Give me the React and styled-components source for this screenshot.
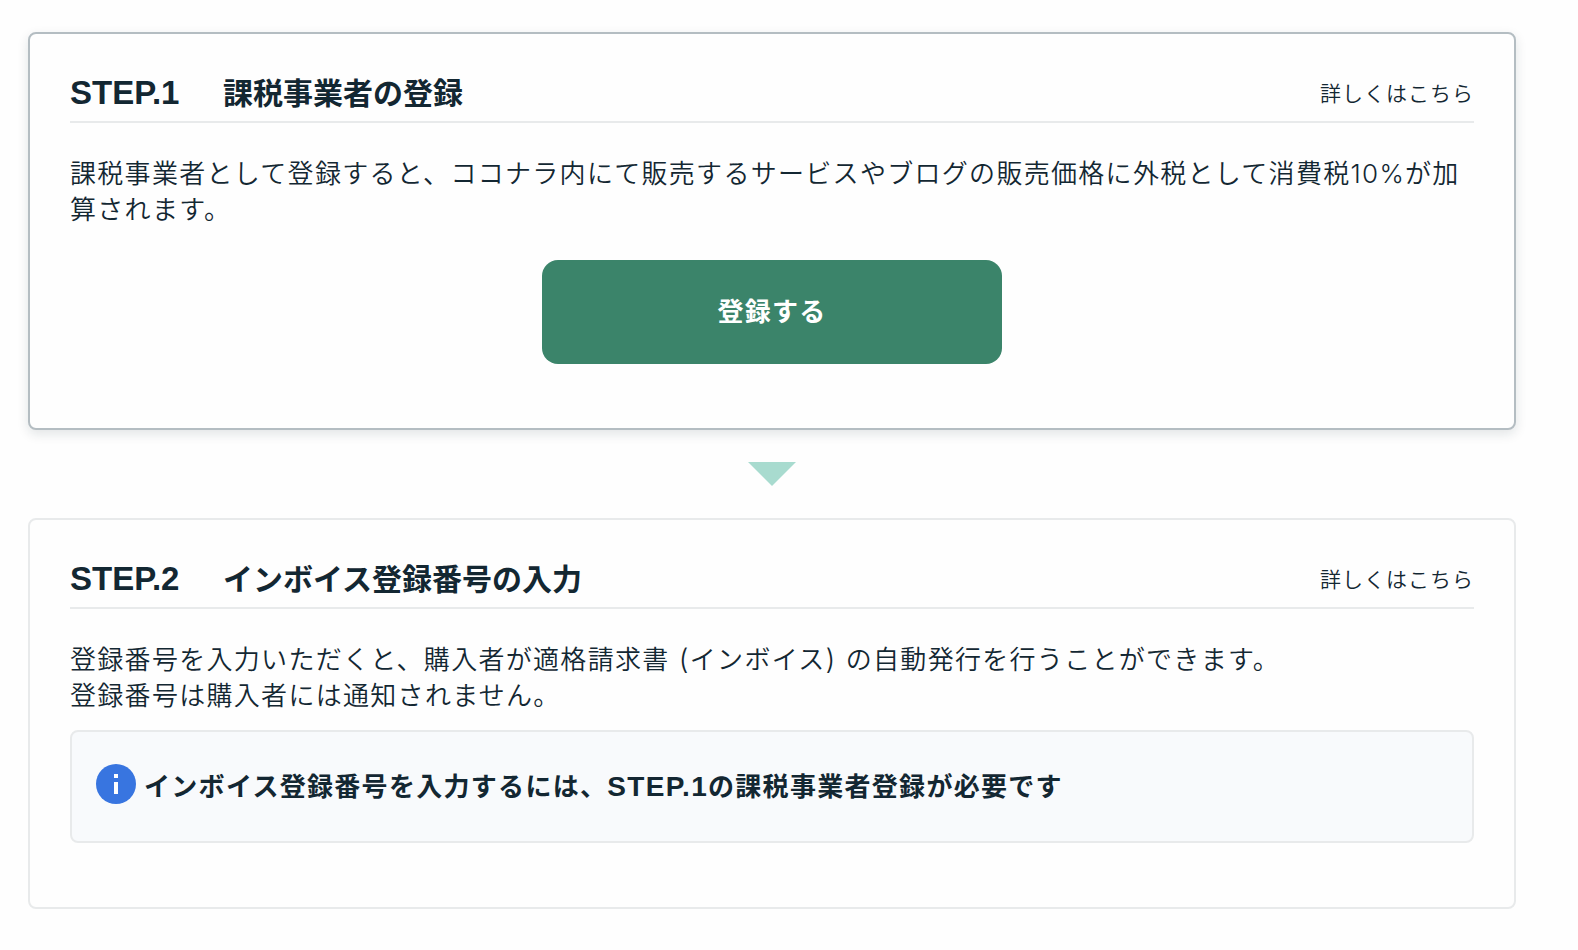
import React from "react";
import styled, { createGlobalStyle } from "styled-components";

const GlobalStyle = createGlobalStyle`
  *, *::before, *::after { box-sizing: border-box; }
  body {
    margin: 0;
    background: #fefefe;
    color: #132732;
    font-family: Inter, "Noto Sans CJK JP", sans-serif;
    font-size: 26px;
    line-height: 36px;
    font-weight: 350;
  }
`;

const strongFont = `"Liberation Sans", "Noto Sans CJK JP", sans-serif`;

const Page = styled.main`
  display: flex;
  flex-direction: column;
  align-items: center;
  gap: 32px;
  padding: 32px 62px 40px 28px;
`;

const Card = styled.section`
  width: 100%;
  padding: 40px 40px 64px;
  border: 2px solid ${(p) => (p.$active ? "#b4bdc2" : "#e8eaeb")};
  border-radius: 8px;
  background: #fefefe;
  box-shadow: ${(p) => (p.$active ? "0 4px 12px rgba(19, 39, 50, 0.12)" : "none")};
`;

const CardHeader = styled.header`
  display: flex;
  align-items: center;
  justify-content: space-between;
  margin-bottom: 33px;
  padding-bottom: 8px;
  border-bottom: 2px solid #e8eaeb;
`;

const Heading = styled.h2`
  display: flex;
  align-items: baseline;
  margin: 0;
  font-family: ${strongFont};
  font-size: 30px;
  line-height: 38px;
  font-weight: 700;
`;

const StepLabel = styled.span`
  width: 153px;
  font-size: 33px;
`;

const DetailLink = styled.a`
  color: inherit;
  font-size: 21px;
  line-height: 36px;
  letter-spacing: 1px;
  text-decoration: none;
`;

const Latin = styled.span`
  font-size: 28px;
  line-height: 1;
`;

const Description = styled.p`
  margin: 0;
  letter-spacing: 0.05em;
`;

const RegisterButton = styled.button`
  display: block;
  width: 460px;
  max-width: 100%;
  height: 104px;
  margin: 32px auto 0;
  padding: 0;
  border: 0;
  border-radius: 16px;
  background: #3b846a;
  color: #fff;
  font: inherit;
  font-weight: 700;
  letter-spacing: 0.05em;
  cursor: pointer;
`;

const Arrow = styled.div`
  border: 24px solid transparent;
  border-top-color: #a8dbcf;
  border-bottom-width: 0;
`;

const Notice = styled.div`
  display: flex;
  align-items: flex-start;
  gap: 8px;
  margin-top: 16px;
  padding: 32px 24px 31px;
  border: 2px solid #e8eaeb;
  border-radius: 8px;
  background: #f8fafc;
`;

const NoticeText = styled.strong`
  font-family: ${strongFont};
  font-weight: 700;
  line-height: 46px;
  letter-spacing: 0.05em;
`;

const InfoIcon = styled.svg`
  flex: none;
  width: 40px;
  height: 40px;
`;

function StepCard({ step, title, active, children }) {
  return (
    <Card $active={active}>
      <CardHeader>
        <Heading>
          <StepLabel>{step}</StepLabel>
          <span>{title}</span>
        </Heading>
        <DetailLink href="#">詳しくはこちら</DetailLink>
      </CardHeader>
      {children}
    </Card>
  );
}

export default function App() {
  return (
    <>
      <GlobalStyle />
      <Page lang="ja">
        <StepCard step="STEP.1" title="課税事業者の登録" active>
          <Description>
            課税事業者として登録すると、ココナラ内にて販売するサービスやブログの販売価格に外税として消費税10%が加算されます。
          </Description>
          <RegisterButton type="button">登録する</RegisterButton>
        </StepCard>
        <Arrow />
        <StepCard step="STEP.2" title="インボイス登録番号の入力">
          <Description>
            登録番号を入力いただくと、購入者が適格請求書<Latin> (</Latin>インボイス<Latin>) </Latin>の自動発行を行うことができます。
            <br />
            登録番号は購入者には通知されません。
          </Description>
          <Notice>
            <InfoIcon viewBox="0 0 40 40" aria-hidden="true">
              <circle cx="20" cy="20" r="20" fill="#3875e0" />
              <path d="M18 10h4v4h-4zM18 18h4v12h-4z" fill="#fff" />
            </InfoIcon>
            <NoticeText>
              インボイス登録番号を入力するには、<Latin>STEP.1</Latin>の課税事業者登録が必要です
            </NoticeText>
          </Notice>
        </StepCard>
      </Page>
    </>
  );
}
